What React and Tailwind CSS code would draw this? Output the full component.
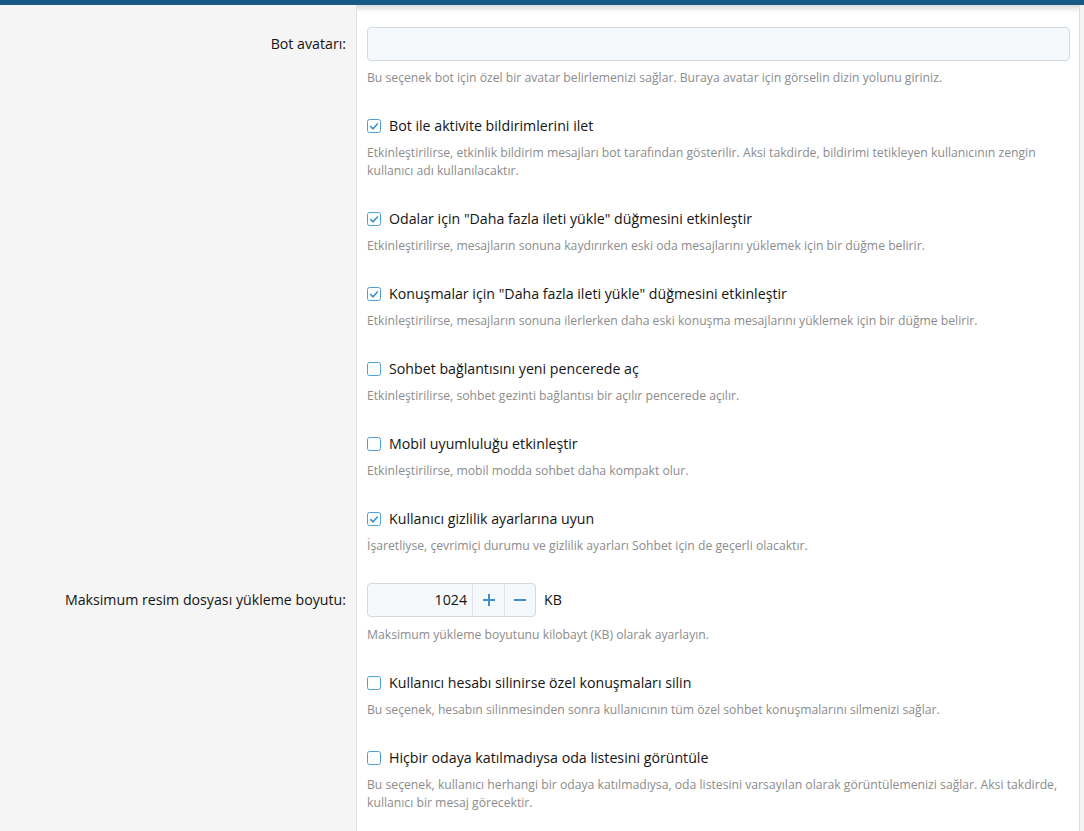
import React, { useState } from 'react';

const Checkbox = ({ checked }) => (
    <svg viewBox="0 0 14 14" className="h-[14px] w-[14px] shrink-0">
        <rect x="0.5" y="0.5" width="13" height="13" rx="2" fill="#fff" stroke="#4a9fde" />
        {checked && <path d="M3.3 7.1 L6 9.8 L10.8 4.4" fill="none" stroke="#3a8fd0" strokeWidth="1.5" />}
    </svg>
);

const Row = ({ label, children }) => (
    <div className="flex">
        <div className="w-[357px] shrink-0 border-r border-[#dfdfdf] bg-[#f5f5f5] pr-[10px] text-right">
            {label && <div className="pt-[6px] text-[14.2px] leading-[22px] text-[#141414]">{label}</div>}
        </div>
        <div className="flex-1 pl-[10px] pr-[9px]">{children}</div>
    </div>
);

const Hint = ({ children }) => (
    <div className="text-[12.2px] leading-[18px] text-[#8c8c8c]">{children}</div>
);

const CheckRow = ({ checked, label, hint }) => (
    <Row>
        <div className="pb-[28px]">
            <label className="flex items-center gap-[8px] text-[14.2px] leading-[22px] text-[#141414]">
                <Checkbox checked={checked} />
                <span>{label}</span>
            </label>
            <div className="mt-[7px]">
                <Hint>{hint}</Hint>
            </div>
        </div>
    </Row>
);

export default function App() {
    const [size, setSize] = useState(1024);

    const checks = [
        {
            checked: true,
            label: 'Bot ile aktivite bildirimlerini ilet',
            hint: 'Etkinleştirilirse, etkinlik bildirim mesajları bot tarafından gösterilir. Aksi takdirde, bildirimi tetikleyen kullanıcının zengin kullanıcı adı kullanılacaktır.',
        },
        {
            checked: true,
            label: 'Odalar için "Daha fazla ileti yükle" düğmesini etkinleştir',
            hint: 'Etkinleştirilirse, mesajların sonuna kaydırırken eski oda mesajlarını yüklemek için bir düğme belirir.',
        },
        {
            checked: true,
            label: 'Konuşmalar için "Daha fazla ileti yükle" düğmesini etkinleştir',
            hint: 'Etkinleştirilirse, mesajların sonuna ilerlerken daha eski konuşma mesajlarını yüklemek için bir düğme belirir.',
        },
        {
            checked: false,
            label: 'Sohbet bağlantısını yeni pencerede aç',
            hint: 'Etkinleştirilirse, sohbet gezinti bağlantısı bir açılır pencerede açılır.',
        },
        {
            checked: false,
            label: 'Mobil uyumluluğu etkinleştir',
            hint: 'Etkinleştirilirse, mobil modda sohbet daha kompakt olur.',
        },
        {
            checked: true,
            label: 'Kullanıcı gizlilik ayarlarına uyun',
            hint: 'İşaretliyse, çevrimiçi durumu ve gizlilik ayarları Sohbet için de geçerli olacaktır.',
        },
    ];

    return (
        <div className="flex min-h-[831px] flex-col bg-white font-['Segoe_UI','Open_Sans',sans-serif]">
            <div className="h-[5px] shrink-0 bg-[#185886] shadow-[0_2px_6px_rgba(0,0,0,0.25)]" />
            <div className="flex flex-1">
                <div className="flex-1">
                    {/* spacer */}
                    <Row>
                        <div className="h-[22px]" />
                    </Row>

                    <Row label="Bot avatarı:">
                        <div className="pb-[28px]">
                            <input
                                type="text"
                                className="block h-[34px] w-full rounded-[4px] border border-[#d8d8d8] bg-[#f6f9fc] px-[10px] text-[14px] outline-none"
                            />
                            <div className="mt-[8px]">
                                <Hint>Bu seçenek bot için özel bir avatar belirlemenizi sağlar. Buraya avatar için görselin dizin yolunu giriniz.</Hint>
                            </div>
                        </div>
                    </Row>

                    {checks.map((c) => (
                        <CheckRow key={c.label} {...c} />
                    ))}

                    <Row label="Maksimum resim dosyası yükleme boyutu:">
                        <div className="pb-[28px]">
                            <div className="flex items-center">
                                <div className="flex h-[34px] overflow-hidden rounded-[4px] border border-[#d8d8d8] bg-[#f6f9fc]">
                                    <input
                                        type="text"
                                        value={size}
                                        onChange={(e) => setSize(e.target.value)}
                                        className="w-[104px] bg-transparent px-[5px] text-right text-[14.2px] text-[#141414] outline-none"
                                    />
                                    <button
                                        onClick={() => setSize(Number(size) + 1)}
                                        className="flex w-[32px] items-center justify-center border-l border-[#e0e5ea] text-[#3d8fd1]"
                                    >
                                        <svg viewBox="0 0 14 14" className="h-[14px] w-[14px]">
                                            <path d="M7 1v12M1 7h12" stroke="currentColor" strokeWidth="2" />
                                        </svg>
                                    </button>
                                    <button
                                        onClick={() => setSize(Number(size) - 1)}
                                        className="flex w-[31px] items-center justify-center border-l border-[#e0e5ea] text-[#3d8fd1]"
                                    >
                                        <svg viewBox="0 0 14 14" className="h-[14px] w-[14px]">
                                            <path d="M1 7h12" stroke="currentColor" strokeWidth="2" />
                                        </svg>
                                    </button>
                                </div>
                                <span className="ml-[8px] text-[14.2px] text-[#141414]">KB</span>
                            </div>
                            <div className="mt-[9px]">
                                <Hint>Maksimum yükleme boyutunu kilobayt (KB) olarak ayarlayın.</Hint>
                            </div>
                        </div>
                    </Row>

                    <CheckRow
                        checked={false}
                        label="Kullanıcı hesabı silinirse özel konuşmaları silin"
                        hint="Bu seçenek, hesabın silinmesinden sonra kullanıcının tüm özel sohbet konuşmalarını silmenizi sağlar."
                    />
                    <CheckRow
                        checked={false}
                        label="Hiçbir odaya katılmadıysa oda listesini görüntüle"
                        hint="Bu seçenek, kullanıcı herhangi bir odaya katılmadıysa, oda listesini varsayılan olarak görüntülemenizi sağlar. Aksi takdirde, kullanıcı bir mesaj görecektir."
                    />
                </div>
                <div className="w-[5px] shrink-0 border-l border-[#dcdcdc] bg-[#f3f3f3]" />
            </div>
        </div>
    );
}
